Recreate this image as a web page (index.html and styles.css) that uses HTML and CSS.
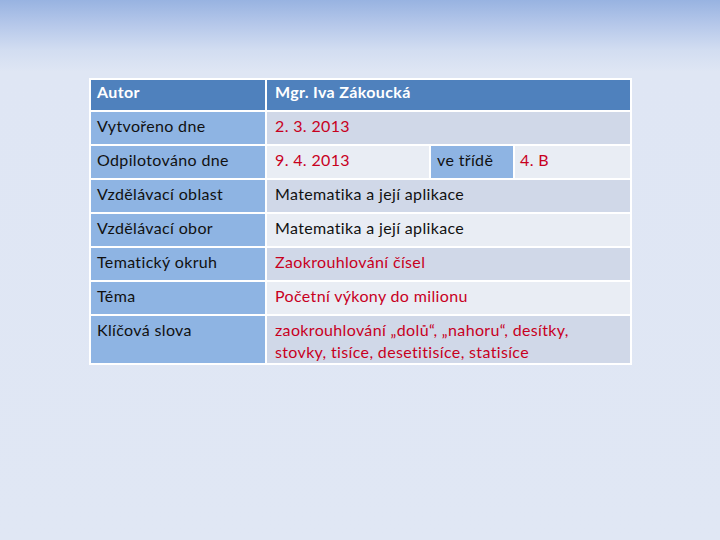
FILE: index.html
```html
<!DOCTYPE html>
<html lang="cs">
<head>
<meta charset="utf-8">
<title>Metodický list</title>
<link rel="stylesheet" href="styles.css">
</head>
<body>
<div class="page">
  <table class="info">
    <colgroup>
      <col class="c1"><col class="c2"><col class="c3"><col class="c4">
    </colgroup>
    <tr class="head">
      <td class="label">Autor</td>
      <td colspan="3">Mgr. Iva Zákoucká</td>
    </tr>
    <tr class="odd">
      <td class="label">Vytvořeno dne</td>
      <td colspan="3" class="red">2. 3. 2013</td>
    </tr>
    <tr class="even">
      <td class="label">Odpilotováno dne</td>
      <td class="red">9. 4. 2013</td>
      <td class="label">ve třídě</td>
      <td class="red klass">4. B</td>
    </tr>
    <tr class="odd">
      <td class="label">Vzdělávací oblast</td>
      <td colspan="3">Matematika a její aplikace</td>
    </tr>
    <tr class="even">
      <td class="label">Vzdělávací obor</td>
      <td colspan="3">Matematika a její aplikace</td>
    </tr>
    <tr class="odd">
      <td class="label">Tematický okruh</td>
      <td colspan="3" class="red">Zaokrouhlování čísel</td>
    </tr>
    <tr class="even">
      <td class="label">Téma</td>
      <td colspan="3" class="red">Početní výkony do milionu</td>
    </tr>
    <tr class="odd tall">
      <td class="label">Klíčová slova</td>
      <td colspan="3" class="red">zaokrouhlování „dolů“, „nahoru“, desítky,<br>stovky, tisíce, desetitisíce, statisíce</td>
    </tr>
  </table>
</div>
</body>
</html>
```
FILE: styles.css
```css
html, body {
  margin: 0;
  padding: 0;
}
body {
  width: 720px;
  height: 540px;
  overflow: hidden;
  background: linear-gradient(to bottom, #98b3e1 0px, #b6c8ea 25px, #d2ddf1 50px, #dfe6f4 72px, #e0e7f4 100%);
  font-family: Lato, "Open Sans", sans-serif;
  font-size: 16px;
  letter-spacing: 0.35px;
  color: #111;
}
.page {
  padding: 78px 0 0 89px;
}
.info {
  border-collapse: separate;
  border-spacing: 2px;
  background: #fff;
  table-layout: fixed;
  width: 541px;
}
.c1 { width: 174px; }
.c2 { width: 162px; }
.c3 { width: 82px; }
.c4 { width: 115px; }
.info td {
  height: 32px;
  padding: 3px 6px 0 8px;
  line-height: 22px;
  vertical-align: top;
  box-sizing: border-box;
  white-space: nowrap;
  overflow: hidden;
}
.info td.label {
  padding-left: 6px;
}
.info td.klass {
  padding-left: 5px;
}
.odd td { background: #d0d8e8; }
.even td { background: #e9edf4; }
.info td.label { background: #8eb4e3; }
.head td {
  background: #4f81bd;
  color: #fff;
  font-weight: bold;
  height: 30px;
  padding-top: 1px;
}
.info .head td.label { background: #4f81bd; }
.tall td { height: 47px; }
.red { color: #c8001e; }
```
